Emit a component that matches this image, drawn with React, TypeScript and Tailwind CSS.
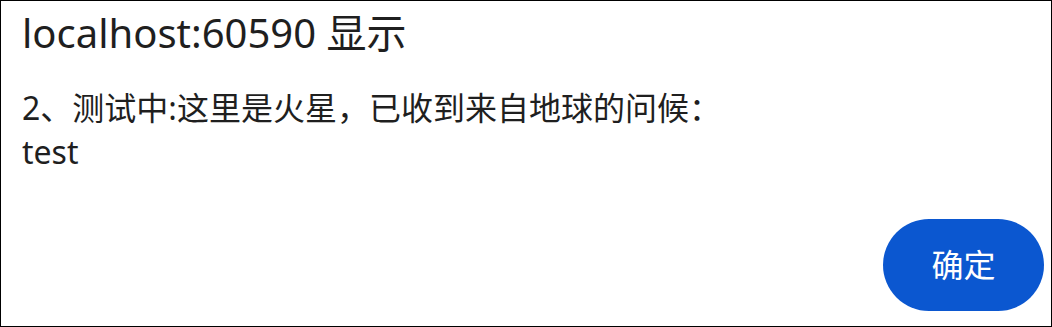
import React from "react";

export default function App() {
  return (
    <div
      className="w-[1052px] h-[327px] border border-black bg-white flex flex-col text-[#1f1f1f]"
      style={{ fontFamily: '"Noto Sans", "Noto Sans CJK SC", sans-serif' }}
    >
      {/* Title */}
      <div className="pl-[21px] pt-[7px] text-[40px] leading-[50px]">localhost:60590 显示</div>

      {/* Message */}
      <div className="pl-[21px] mt-[28px] text-[32px] leading-[44px]">
        <p>2、测试中:这里是火星，已收到来自地球的问候：</p>
        <p>test</p>
      </div>

      {/* Actions */}
      <div className="mt-auto flex justify-end pr-[7px] pb-[15px]">
        <button className="w-[161px] h-[92px] rounded-full bg-[#0b57d0] text-white text-[32px]">
          确定
        </button>
      </div>
    </div>
  );
}
